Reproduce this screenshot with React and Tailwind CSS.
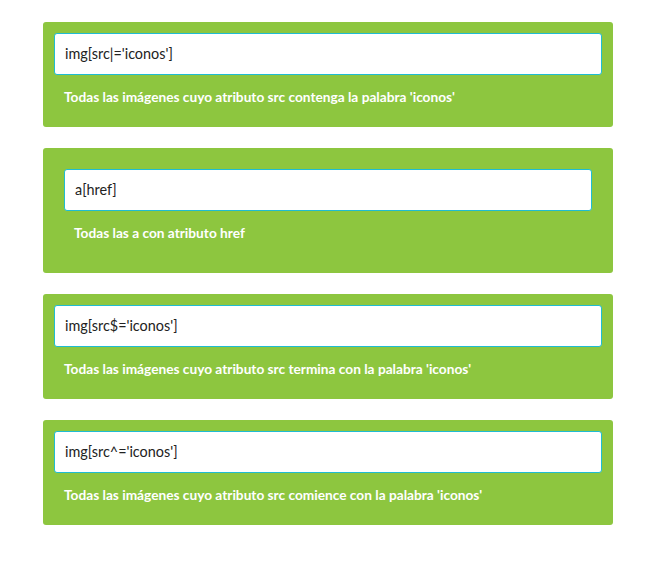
const items = [
  { value: "img[src|='iconos']", label: "Todas las imágenes cuyo atributo src contenga la palabra 'iconos'", pad: "p-[11px]" },
  { value: "a[href]", label: "Todas las a con atributo href", pad: "p-[21px]" },
  { value: "img[src$='iconos']", label: "Todas las imágenes cuyo atributo src termina con la palabra 'iconos'", pad: "p-[11px]" },
  { value: "img[src^='iconos']", label: "Todas las imágenes cuyo atributo src comience con la palabra 'iconos'", pad: "p-[11px]" },
];

export default function App() {
  return (
    <div className="min-h-screen bg-white pl-[43px] pt-[22px]" style={{ fontFamily: "Lato, 'Open Sans', sans-serif" }}>
      <div className="flex w-[570px] flex-col gap-[21px]">
        {items.map((item) => (
          <div key={item.value} className={`rounded-[3px] bg-[#8dc63f] ${item.pad}`}>
            <div className="flex h-[42px] items-center rounded-[3px] border border-[#1fbcd2] bg-white px-[10px] text-[14.4px] text-[#222]">
              {item.value}
            </div>
            <p className="px-[10px] pt-[12px] pb-[9px] text-[13.7px] leading-[20px] font-bold text-white">{item.label}</p>
          </div>
        ))}
      </div>
    </div>
  );
}
